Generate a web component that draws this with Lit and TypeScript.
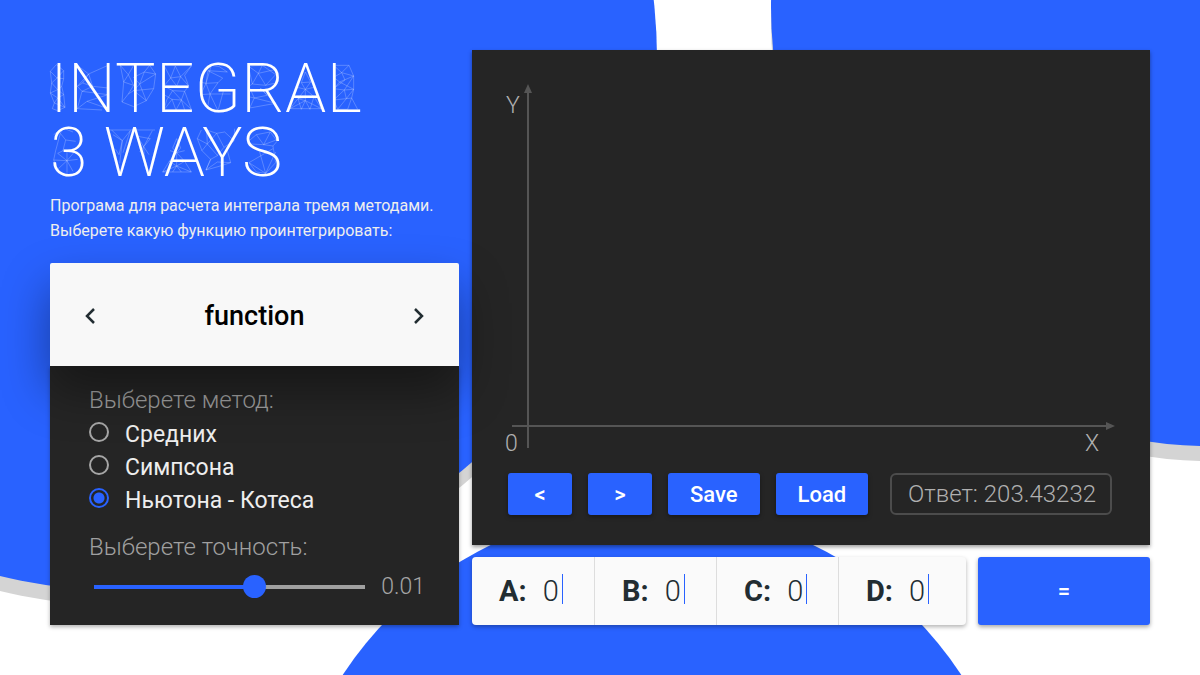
import { LitElement, html, css, svg } from "lit";
import { customElement, state } from "lit/decorators.js";

const METHODS = ["Средних", "Симпсона", "Ньютона - Котеса"];
const COEFFICIENTS = ["A", "B", "C", "D"];

// Wireframe facets behind each title letter: offset of the cluster and its edges.
const MESHES = [
  { x: -3, y: 8, d: "M10 40 L28 20 L50 38 L50 62 L44 85 L50 110 L54 148 L32 158 L16 152 L22 135 L10 105 L14 75 Z M10 40 L30 60 L50 38 M14 75 L30 60 L50 62 M14 75 L32 95 L44 85 M10 105 L32 95 L50 110 M22 135 L32 120 L10 105 M32 120 L50 110 M22 135 L54 148 M32 120 L54 148" },
  { x: -8, y: 8, d: "M106 22 L140 48 L198 22 M140 48 L106 85 L122 75 L140 48 L152 85 L198 90 M122 75 L152 85 L120 100 L106 85 M120 100 L198 110 L135 130 L106 152 L120 100 M135 130 L198 152 M106 152 L180 156" },
  { x: -9, y: 8, d: "M238 22 L262 50 L248 72 L278 82 L262 50 L278 22 M238 22 L248 72 L243 132 L278 146 L316 128 L338 92 L344 48 L326 22 L310 42 L278 58 M310 42 L344 48 L296 78 L278 58 M310 42 L296 78 L278 98 L338 92 M296 78 L316 128 L278 98 L262 108 L243 132 M278 82 L262 108" },
  { x: -12, y: 8, d: "M378 22 L398 60 L412 24 L428 56 L460 24 L440 52 L452 84 M398 60 L428 56 L416 84 L398 60 L378 84 M428 56 L452 84 L440 100 L404 98 L382 86 M404 98 L386 126 L378 156 L402 124 L430 126 L440 100 M404 98 L430 126 L460 154 L440 100 M402 124 L414 156 L430 126 L440 156 M378 110 L402 124" },
  { x: 144, y: 8, d: "M30 38 L52 22 L76 26 L100 42 L42 38 L36 76 L72 74 L86 60 L42 38 M52 22 L36 76 L16 72 M72 74 L48 108 L36 76 L20 110 L48 108 L40 152 M48 108 L72 158 L88 100 M48 108 L110 108 M20 110 L40 152 L72 158 L112 150" },
  { x: 147, y: 8, d: "M154 24 L196 22 L184 46 L154 24 L166 78 L184 46 L238 34 M184 46 L206 82 L166 78 L154 86 M206 82 L236 50 L196 22 M206 82 L240 74 M158 90 L172 120 L158 150 L236 136 L172 120 L210 112 L190 90 M172 120 L154 116 M190 90 L236 136" },
  { x: 144, y: 8, d: "M334 42 L322 74 L334 94 L350 72 Z M322 74 L350 72 M310 88 L334 94 L360 88 M334 94 L312 122 L360 116 Z M334 94 L334 128 L312 122 L288 152 L334 128 L382 152 L360 116 M312 122 L322 154 L334 128 L348 154 L360 116 M288 152 H382" },
  { x: 141, y: 8, d: "M428 22 H474 L488 54 L488 94 L482 120 L500 154 M428 22 L452 44 L474 22 M428 58 L452 44 L488 54 L446 72 L428 58 M452 44 L462 66 L428 92 L446 72 L488 94 L460 96 L428 92 M488 54 L460 96 L428 126 L466 122 L488 94 M460 96 L466 122 L440 154 L428 126 M466 122 L482 120 L470 154 L440 154" },
  { x: -3, y: 70, d: "M20 44 L48 24 L78 36 M48 24 L40 40 L56 60 L48 92 M40 40 L26 92 L20 120 L60 122 L32 100 L48 92 M56 60 L86 64 M60 92 V158 M60 122 L92 118 M60 122 L82 96 M60 122 L32 148 L20 120 M60 122 L78 154" },
  { x: -7, y: 70, d: "M200 30 H336 M206 30 L238 62 L262 32 M210 44 L238 62 L228 104 L218 88 M238 62 L230 130 M262 32 L240 98 M272 30 L302 80 L328 32 M278 48 L322 56 L302 80 L290 96 M302 80 L306 140 M302 80 L318 104" },
  { x: -6, y: 70, d: "M398 56 L386 84 L398 98 L410 84 Z M378 92 L398 98 L422 92 M398 98 L376 124 H422 Z M356 156 H442 M376 124 L356 156 L398 138 L442 156 L422 124 M376 124 L398 138 L422 124 M398 98 V138 M386 156 L398 138 L412 156" },
  { x: -8, y: 70, d: "M478 30 L466 56 L496 72 L524 40 L494 30 M494 30 L496 72 L480 92 L466 56 M496 72 L526 106 L546 82 L576 62 L548 36 L524 40 L546 82 M578 26 L576 62 L554 84 L566 128 L528 140 L492 150 L506 118 L528 106 M480 92 L506 118 L492 150 L526 126 L566 128" },
  { x: -7, y: 70, d: "M614 66 L640 44 L682 36 L662 74 L622 72 M640 44 L662 74 L700 60 L682 36 M662 74 L690 78 L702 64 M690 78 L698 128 L668 160 L650 96 M618 128 L690 86 M618 128 L640 156 L668 160 L698 96 M618 128 L668 160" },
];

@customElement("integral-backdrop")
class IntegralBackdrop extends LitElement {
  static styles = css`
    :host { display: block; }
    .shapes { display: block; width: 100%; height: 100%; }
    .disc { fill: #2962ff; }
    .shade { fill: #d4d4d4; }
  `;
  render() {
    return html`<svg class="shapes" viewBox="0 0 1200 675" preserveAspectRatio="xMidYMid slice" aria-hidden="true">
      <circle class="shade" cx="125" cy="74" r="532" />
      <circle class="disc" cx="125" cy="59" r="532" />
      <circle class="shade" cx="1210" cy="22" r="439" />
      <circle class="disc" cx="1210" cy="7" r="439" />
      <circle class="disc" cx="652" cy="878" r="370" />
    </svg>`;
  }
}

@customElement("integral-chart")
class IntegralChart extends LitElement {
  static styles = css`
    :host { display: block; }
    .plot { display: block; width: 100%; }
    .axis { stroke: #555; stroke-width: 2; }
    .arrow { fill: #555; }
    .name { fill: #b0b0b0; font: 300 23px Roboto, sans-serif; }
  `;
  render() {
    return html`<svg class="plot" viewBox="0 0 678 423" role="img" aria-label="X Y">
      <line class="axis" x1="56" y1="40" x2="56" y2="398" />
      <line class="axis" x1="40" y1="376" x2="636" y2="376" />
      <path class="arrow" d="M56 34 L60 43 H52 Z" />
      <path class="arrow" d="M643 376 L634 372 V380 Z" />
      <text class="name" x="34" y="63">Y</text>
      <text class="name" x="33" y="401">0</text>
      <text class="name" x="613" y="401">X</text>
    </svg>`;
  }
}

@customElement("app-root")
class AppRoot extends LitElement {
  @state() private method = 2;
  @state() private level = 60;

  static styles = css`
    :host {
      display: block;
      position: relative;
      min-height: 100vh;
      overflow: hidden;
      background: #fff;
      font-family: Roboto, sans-serif;
      color: #eee;
    }
    * { box-sizing: border-box; }
    button, input { font: inherit; color: inherit; margin: 0; }
    .backdrop { position: absolute; inset: 0; }
    .page {
      position: relative;
      display: grid;
      grid-template-columns: 409fr 678fr;
      gap: 13px;
      padding: 50px;
    }
    .side, .work { display: flex; flex-direction: column; min-width: 0; }
    .title {
      position: relative;
      margin: 0;
      padding-top: 7px;
      font-size: 68px;
      line-height: 64px;
      font-weight: 200;
      color: #fff;
    }
    .mesh {
      position: absolute;
      top: 0;
      left: 0;
      width: 340px;
      height: 136px;
      overflow: visible;
      fill: none;
      stroke: rgba(255, 255, 255, 0.28);
      stroke-width: 2.5;
    }
    .intro { margin: 8px 0 0; padding-bottom: 20px; font-size: 16px; line-height: 25px; }
    .picker {
      position: relative;
      display: flex;
      align-items: center;
      justify-content: space-between;
      height: 103px;
      padding: 3px 28px 0;
      background: #f8f8f8;
      border-radius: 2px 2px 0 0;
      box-shadow: 0 24px 48px rgba(0, 0, 0, 0.4);
      color: #000;
      font-size: 27px;
      font-weight: 500;
    }
    .step { display: flex; padding: 4px; border: 0; background: none; }
    .chevron { width: 16px; height: 24px; fill: none; stroke: #222d32; stroke-width: 2.5; }
    .settings {
      display: flex;
      flex-direction: column;
      flex: 1;
      padding: 18px 34px 20px 39px;
      background: #252525;
      box-shadow: 0 2px 4px rgba(0, 0, 0, 0.3);
      font-size: 23px;
      line-height: 33px;
    }
    .methods { margin: 0; padding: 0; border: 0; }
    .caption { padding: 0; font-size: 24px; font-weight: 300; color: #a0a0a0; }
    .method { display: flex; gap: 16px; height: 33px; }
    .method-name { padding-top: 2px; line-height: 31px; }
    .radio {
      appearance: none;
      width: 20px;
      height: 20px;
      margin-top: 5px;
      border: 2px solid #a6a6a6;
      border-radius: 50%;
    }
    .radio:checked {
      border-color: #2962ff;
      background: radial-gradient(circle, #2962ff 5px, transparent 6px);
    }
    .precision { display: block; margin-top: 15px; }
    .scale { display: flex; align-items: center; gap: 16px; margin-top: 6px; font-weight: 300; color: #a6a6a6; }
    .slider {
      appearance: none;
      flex: 1;
      min-width: 0;
      height: 24px;
      margin-left: 5px;
      background: linear-gradient(#2962ff, #2962ff) left center / var(--level) 4px no-repeat,
        linear-gradient(#a0a0a0, #a0a0a0) center / 100% 4px no-repeat;
    }
    .slider::-webkit-slider-thumb {
      appearance: none;
      width: 23px;
      height: 23px;
      border-radius: 50%;
      background: #2962ff;
    }
    .board { background: #252525; box-shadow: 0 2px 4px rgba(0, 0, 0, 0.4); }
    .actions { display: flex; gap: 16px; padding: 0 38px 30px 36px; }
    .action {
      min-width: 64px;
      height: 42px;
      padding: 0 22px;
      border: 0;
      border-radius: 3px;
      background: #2962ff;
      box-shadow: 0 2px 4px rgba(0, 0, 0, 0.35);
      color: #fff;
      font-size: 22px;
      font-weight: 500;
    }
    .answer {
      margin-left: auto;
      padding: 0 14px 0 16px;
      border: 2px solid #4c4c4c;
      border-radius: 6px;
      font-size: 24px;
      line-height: 38px;
      font-weight: 300;
      color: #b0b0b0;
      white-space: nowrap;
    }
    .inputs { display: grid; grid-template-columns: 494fr 172fr; gap: 12px; margin-top: 12px; height: 68px; }
    .fields {
      display: grid;
      grid-template-columns: 122fr 122fr 122fr 128fr;
      background: #fafafa;
      border-radius: 4px;
      box-shadow: 0 2px 4px rgba(0, 0, 0, 0.3);
    }
    .field {
      display: flex;
      align-items: center;
      padding-left: 27px;
      color: #222d32;
      font-size: 29px;
      font-weight: 700;
    }
    .field + .field { border-left: 1px solid #ddd; }
    .value { width: 18px; margin-left: 16px; padding: 0; border: 0; background: none; font-weight: 300; outline: 0; }
    .caret { width: 1px; height: 30px; margin: 0 0 5px 1px; background: #2962ff; }
    .equals { height: auto; }
  `;

  render() {
    return html`
      <integral-backdrop class="backdrop"></integral-backdrop>
      <main class="page">
        <section class="side">
          <h1 class="title">
            <svg class="mesh" viewBox="0 0 340 136" aria-hidden="true">
              ${MESHES.map((m) => svg`<path transform="translate(${m.x} ${m.y}) scale(0.3333)" d=${m.d} />`)}
            </svg>
            INTEGRAL<br />3 WAYS
          </h1>
          <p class="intro">Програма для расчета интеграла тремя методами.<br />Выберете какую функцию проинтегрировать:</p>
          <div class="picker">
            <button class="step" aria-label="<"><svg class="chevron" viewBox="0 0 16 24"><path d="M12 5 L5 12 L12 19" /></svg></button>
            <span>function</span>
            <button class="step" aria-label=">"><svg class="chevron" viewBox="0 0 16 24"><path d="M4 5 L11 12 L4 19" /></svg></button>
          </div>
          <div class="settings">
            <fieldset class="methods">
              <legend class="caption">Выберете метод:</legend>
              ${METHODS.map((name, i) => html`
                <label class="method">
                  <input class="radio" type="radio" name="method" .checked=${this.method === i} @change=${() => (this.method = i)} />
                  <span class="method-name">${name}</span>
                </label>`)}
            </fieldset>
            <label class="caption precision" for="precision">Выберете точность:</label>
            <div class="scale">
              <input class="slider" id="precision" type="range" min="0" max="100" .value=${String(this.level)}
                style="--level: ${this.level}%"
                @input=${(e: Event) => (this.level = Number((e.target as HTMLInputElement).value))} />
              <output for="precision">0.01</output>
            </div>
          </div>
        </section>
        <section class="work">
          <div class="board">
            <integral-chart></integral-chart>
            <div class="actions">
              <button class="action">&lt;</button>
              <button class="action">&gt;</button>
              <button class="action">Save</button>
              <button class="action">Load</button>
              <output class="answer">Ответ: 203.43232</output>
            </div>
          </div>
          <div class="inputs">
            <div class="fields">
              ${COEFFICIENTS.map((name) => html`
                <label class="field">${name}:
                  <input class="value" type="text" inputmode="decimal" value="0" />
                  <span class="caret"></span>
                </label>`)}
            </div>
            <button class="action equals">=</button>
          </div>
        </section>
      </main>
    `;
  }
}
